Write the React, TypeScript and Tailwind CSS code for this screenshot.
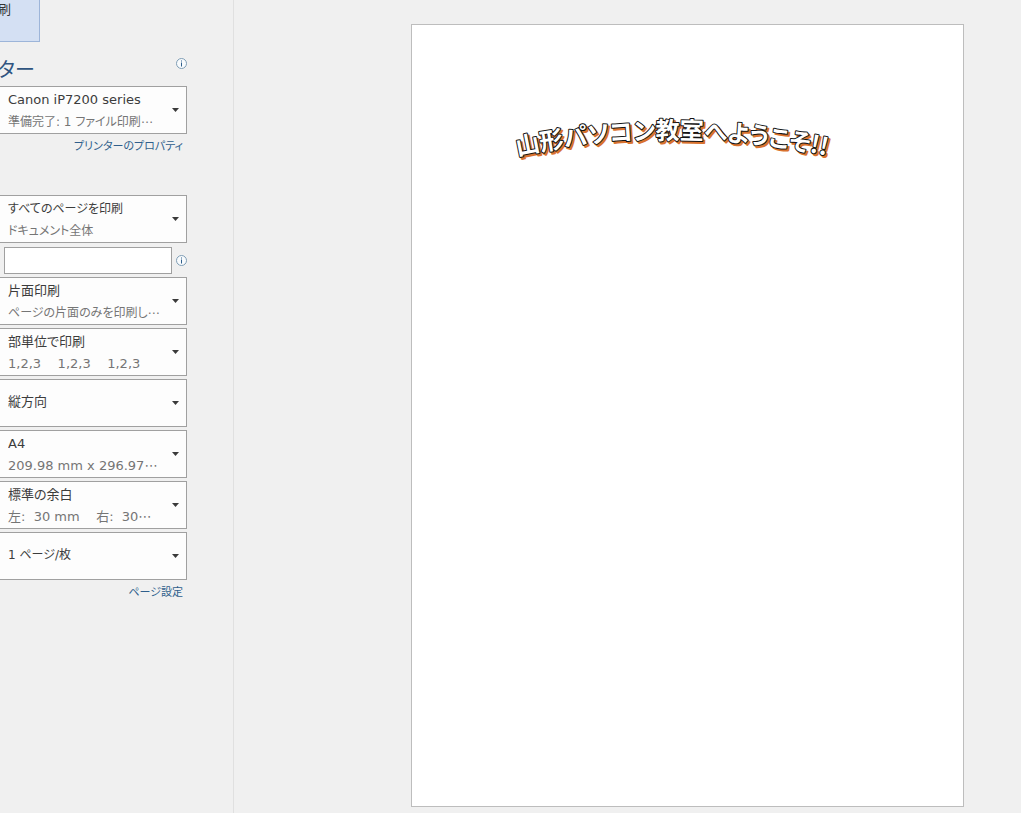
import { useId } from 'react'

interface SettingProps {
  label: string
  value: string
  detail?: string
}

const FIELD = 'appearance-none w-full h-12 pl-2 pr-6 border border-l-0 border-[#a0a0a0] bg-[#fdfdfd] leading-[22px] text-[#3c3c3c] outline-none focus:border-[#2b579a]'

const textSize = (text: string) => (/[ァ-ヶ]/.test(text) ? 'text-[12px]' : 'text-[13px]')

function Caret() {
  return (
    <svg viewBox="0 0 7 4" className="w-[7px] h-1 fill-[#3a3a3a]" aria-hidden="true">
      <path d="M0 0h7L3.5 4z" />
    </svg>
  )
}

function InfoIcon() {
  return (
    <svg viewBox="0 0 11 11" className="w-[11px] h-[11px] flex-shrink-0" aria-hidden="true">
      <circle cx="5.5" cy="5.5" r="5" fill="#f8fbfd" stroke="#7f9db5" />
      <path d="M5 2.5h1v1H5zM5 4.5h1v4H5z" fill="#2f5f8c" />
    </svg>
  )
}

// The select and its second line share one grid cell
function Setting({ label, value, detail }: SettingProps) {
  const id = useId()
  return (
    <div className="grid items-center">
      <select
        aria-label={label}
        aria-describedby={detail ? id : undefined}
        defaultValue={value}
        className={`${FIELD} ${textSize(value)} col-start-1 row-start-1 ${detail ? 'pt-[1px] pb-[22px]' : 'pb-[2px]'}`}
      >
        <option value={value}>{value}</option>
      </select>
      {detail && (
        <span id={id} className={`${textSize(detail)} col-start-1 row-start-1 self-end pl-2 pb-[1px] leading-[22px] text-[#757575] whitespace-pre pointer-events-none`}>
          {detail}
        </span>
      )}
      <span className="col-start-1 row-start-1 justify-self-end pr-2 pointer-events-none">
        <Caret />
      </span>
    </div>
  )
}

const LAYOUT_SETTINGS: SettingProps[] = [
  { label: '印刷面', value: '片面印刷', detail: 'ページの片面のみを印刷し⋯' },
  { label: '部単位', value: '部単位で印刷', detail: '1,2,3    1,2,3    1,2,3' },
  { label: '向き', value: '縦方向' },
  { label: '用紙サイズ', value: 'A4', detail: '209.98 mm x 296.97⋯' },
  { label: '余白', value: '標準の余白', detail: '左:  30 mm    右:  30⋯' },
  { label: '枚あたりのページ数', value: '1 ページ/枚' },
]

const TITLE = '山形パソコン教室へようこそ!!'

function PagePreview() {
  return (
    <svg viewBox="0 0 551 781" className="w-full block" role="img" aria-label={TITLE}>
      <defs>
        <path id="arch" d="M91 134A730 730 0 0 1 429 134" />
      </defs>
      <g
        fontFamily='"Noto Sans CJK JP", sans-serif'
        fontSize="24"
        fontWeight="700"
        strokeLinejoin="round"
        textAnchor="middle"
        paintOrder="stroke"
      >
        <text transform="translate(2 2)" fill="#d9722e" stroke="#d9722e" strokeWidth="2" aria-hidden="true">
          <textPath href="#arch" startOffset="50%">{TITLE}</textPath>
        </text>
        <text fill="#ffffff" stroke="#141414" strokeWidth="2">
          <textPath href="#arch" startOffset="50%">{TITLE}</textPath>
        </text>
      </g>
    </svg>
  )
}

export default function App() {
  return (
    <div className="flex min-h-screen bg-[#f0f0f0] overflow-hidden font-['DejaVu_Sans','Noto_Sans_CJK_JP',sans-serif] [font-feature-settings:'palt']">
      <aside className="w-[234px] flex-shrink-0 border-r border-[#e0e0e0] overflow-hidden">
        <div className="w-[187px]">
          {/* Print button */}
          <button className="block -ml-10 w-20 h-[42px] pb-[22px] pl-6 text-left border border-t-0 border-[#9db5d9] bg-[#d4e0f3] text-[13px] leading-[18px] text-[#333]">
            印刷
          </button>

          {/* Printer */}
          <div className="flex justify-between pt-4 h-[44px]">
            <h2 className="-ml-[55px] text-[20px] leading-6 text-[#2f5480]">プリンター</h2>
            <button className="h-[11px]" aria-label="プリンターの状態">
              <InfoIcon />
            </button>
          </div>
          <Setting label="プリンター" value="Canon iP7200 series" detail="準備完了: 1 ファイル印刷⋯" />
          <div className="text-right pr-1 pt-[3px] text-[11px] leading-[20px]">
            <a href="#printer" className="text-[#2f5f8c]">プリンターのプロパティ</a>
          </div>

          {/* Settings */}
          <div className="pt-[38px] flex flex-col gap-[3px]">
            <Setting label="印刷範囲" value="すべてのページを印刷" detail="ドキュメント全体" />
            <div className="flex items-center justify-between pl-1 pt-px">
              <input type="text" aria-label="ページ" className="w-[168px] h-[27px] px-1 border border-[#a0a0a0] bg-white text-[13px] outline-none focus:border-[#2b579a]" />
              <button aria-label="ページ指定のヘルプ">
                <InfoIcon />
              </button>
            </div>
            {LAYOUT_SETTINGS.map(s => <Setting key={s.label} {...s} />)}
          </div>
          <div className="text-right pr-1 pt-[3px] text-[11px] leading-[20px]">
            <a href="#page-setup" className="text-[#2f5f8c]">ページ設定</a>
          </div>
        </div>
      </aside>

      <main className="flex-1 min-w-0 pt-6 pb-1 pl-[177px] pr-[57px]">
        <div className="border border-[#bdbdbd] bg-white">
          <PagePreview />
        </div>
      </main>
    </div>
  )
}
